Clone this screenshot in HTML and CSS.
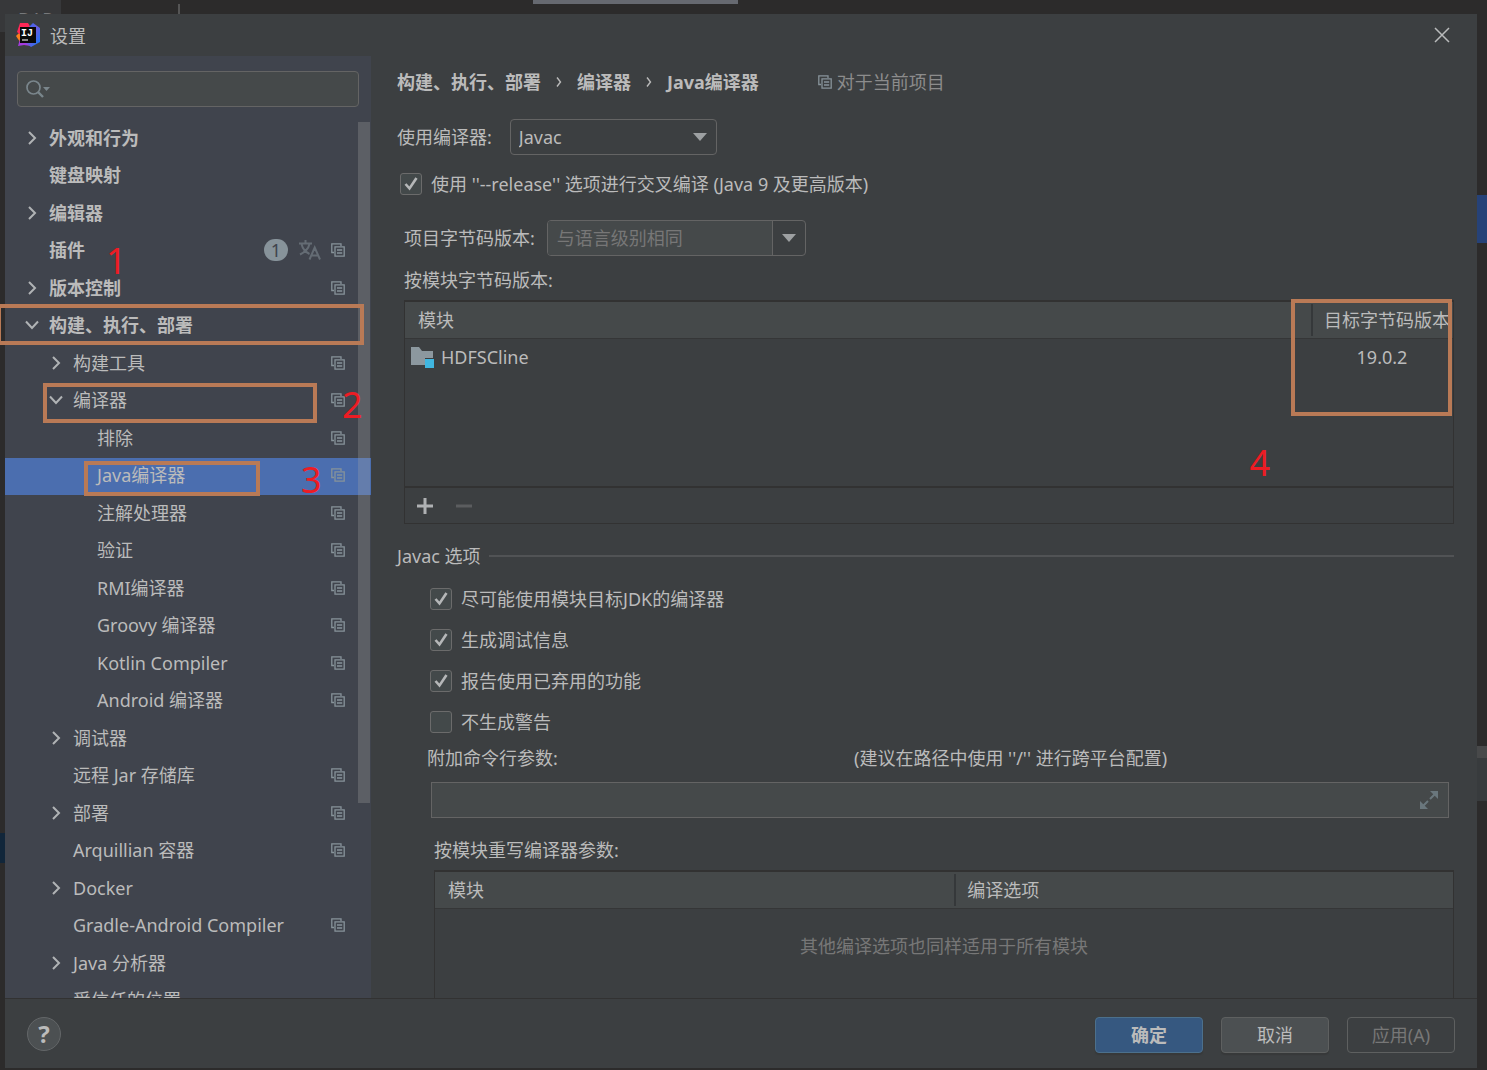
FILE: index.html
```html
<!DOCTYPE html>
<html lang="zh-CN">
<head>
<meta charset="utf-8">
<meta name="viewport" content="width=device-width, initial-scale=1">
<title>设置</title>
<link rel="stylesheet" href="styles.css">
</head>
<body>
<svg class="symbols" aria-hidden="true">
  <symbol id="right" viewBox="0 0 16 16"><path d="M5 2 11 8 5 14" fill="none" stroke="#b0b3b5" stroke-width="2"/></symbol>
  <symbol id="down" viewBox="0 0 16 16"><path d="M2 4.500 8 11 14 4.500" fill="none" stroke="#b0b3b5" stroke-width="2"/></symbol>
  <symbol id="copy" viewBox="0 0 14 14"><path d="M3 9.500H.8V.8H10V3M4 3.800h9.200v9.400H4zM6 7h5.200M6 10h5.200" fill="none" stroke="#87939a" stroke-width="1.300"/></symbol>
  <symbol id="arrow" viewBox="0 0 14 8"><path d="M0 0h14L7 8z" fill="#9da0a2"/></symbol>
  <symbol id="crumb" viewBox="0 0 6 12"><path d="M1 1.500 4.500 6 1 10.500" fill="none" stroke="#bbb" stroke-width="1.400"/></symbol>
</svg>

<div class="backdrop" aria-hidden="true">
  <span class="backdrop-tab">DAP</span><span class="backdrop-caret"></span><span class="backdrop-bar"></span>
  <span class="backdrop-blue"></span><span class="backdrop-navy"></span><span class="backdrop-scroll"></span>
</div>

<main class="dialog">
  <header class="titlebar">
    <svg class="logo" viewBox="0 0 24 24" aria-hidden="true">
      <defs><linearGradient id="blue" x1="0" y1="0" x2="1" y2="1"><stop offset="0" stop-color="#2b6cf5"/><stop offset=".5" stop-color="#6a5be0"/><stop offset="1" stop-color="#087cfa"/></linearGradient></defs>
      <path d="M0 13 4 9l4 5-4 5z" fill="#fc801d"/>
      <path d="M4 0h8l3 5-8 9-6-5z" fill="#fe2857"/>
      <path d="M4 16 2 23l6-1 7 1 5-8z" fill="#a43be0"/>
      <path d="m17 0 7 5v14l-9 5-5-4 3-16z" fill="url(#blue)"/>
      <path d="M4 4h16v16H4z" fill="#090909"/>
      <text x="5" y="13" class="logo-text">IJ</text>
      <path d="M6 17h6" stroke="#ddd" stroke-width="1.200"/>
    </svg>
    <h1>设置</h1>
    <button class="close" aria-label="关闭"><svg viewBox="0 0 16 16"><path d="m1 1 14 14M15 1 1 15" stroke="#b9bbbc" stroke-width="1.500"/></svg></button>
  </header>

  <div class="body">
    <nav class="sidebar">
      <label class="search">
        <svg viewBox="0 0 24 18" aria-hidden="true"><circle cx="7.500" cy="7.500" r="6.500" fill="none" stroke="#7a868c" stroke-width="1.700"/><path d="m12 12 5 5" stroke="#7a868c" stroke-width="2.400"/><path d="M17 7h7l-3.500 4z" fill="#7a868c"/></svg>
        <input type="search" aria-label="搜索设置">
      </label>
      <div class="tree-pane">
        <ul class="tree">
          <li class="row top"><svg class="twist"><use href="#right"/></svg><span>外观和行为</span></li>
          <li class="row top"><i class="twist"></i><span>键盘映射</span></li>
          <li class="row top"><svg class="twist"><use href="#right"/></svg><span>编辑器</span></li>
          <li class="row top"><i class="twist"></i><span>插件</span><b class="badge">1</b>
            <svg class="translate" viewBox="0 0 22 20" aria-hidden="true"><path d="M0 3.500h13M6.500 0v3.500M2.500 4c1 4.500 4 8 8 10M10.500 4C9.500 8.500 6 12 1 14.500M10.500 19.500 15.700 7.500 21 19.500M12.500 15.500h6.500" fill="none" stroke="#646c74" stroke-width="2"/></svg>
            <svg class="copy"><use href="#copy"/></svg></li>
          <li class="row top"><svg class="twist"><use href="#right"/></svg><span>版本控制</span><svg class="copy"><use href="#copy"/></svg></li>
          <li class="row top"><svg class="twist"><use href="#down"/></svg><span>构建、执行、部署</span></li>
          <li class="row sub"><svg class="twist"><use href="#right"/></svg><span>构建工具</span><svg class="copy"><use href="#copy"/></svg></li>
          <li class="row sub"><svg class="twist"><use href="#down"/></svg><span>编译器</span><svg class="copy"><use href="#copy"/></svg></li>
          <li class="row leaf"><i class="twist"></i><span>排除</span><svg class="copy"><use href="#copy"/></svg></li>
          <li class="row leaf selected"><i class="twist"></i><span>Java编译器</span><svg class="copy"><use href="#copy"/></svg></li>
          <li class="row leaf"><i class="twist"></i><span>注解处理器</span><svg class="copy"><use href="#copy"/></svg></li>
          <li class="row leaf"><i class="twist"></i><span>验证</span><svg class="copy"><use href="#copy"/></svg></li>
          <li class="row leaf"><i class="twist"></i><span>RMI编译器</span><svg class="copy"><use href="#copy"/></svg></li>
          <li class="row leaf"><i class="twist"></i><span>Groovy 编译器</span><svg class="copy"><use href="#copy"/></svg></li>
          <li class="row leaf"><i class="twist"></i><span>Kotlin Compiler</span><svg class="copy"><use href="#copy"/></svg></li>
          <li class="row leaf"><i class="twist"></i><span>Android 编译器</span><svg class="copy"><use href="#copy"/></svg></li>
          <li class="row sub"><svg class="twist"><use href="#right"/></svg><span>调试器</span></li>
          <li class="row sub"><i class="twist"></i><span>远程 Jar 存储库</span><svg class="copy"><use href="#copy"/></svg></li>
          <li class="row sub"><svg class="twist"><use href="#right"/></svg><span>部署</span><svg class="copy"><use href="#copy"/></svg></li>
          <li class="row sub"><i class="twist"></i><span>Arquillian 容器</span><svg class="copy"><use href="#copy"/></svg></li>
          <li class="row sub"><svg class="twist"><use href="#right"/></svg><span>Docker</span></li>
          <li class="row sub"><i class="twist"></i><span>Gradle-Android Compiler</span><svg class="copy"><use href="#copy"/></svg></li>
          <li class="row sub"><svg class="twist"><use href="#right"/></svg><span>Java 分析器</span></li>
          <li class="row sub"><i class="twist"></i><span>受信任的位置</span></li>
        </ul>
        <span class="thumb"></span>
      </div>
    </nav>

    <section class="content">
      <div class="crumbs">
        <b>构建、执行、部署</b><svg class="sep"><use href="#crumb"/></svg><b>编译器</b><svg class="sep"><use href="#crumb"/></svg><b>Java编译器</b>
        <span class="scope"><svg class="copy"><use href="#copy"/></svg>对于当前项目</span>
      </div>

      <div class="compiler">
        <label for="compiler">使用编译器:</label>
        <div class="select"><select id="compiler"><option>Javac</option></select><svg class="arrow"><use href="#arrow"/></svg></div>
      </div>

      <label class="check release"><input type="checkbox" checked><span>使用 ''--release'' 选项进行交叉编译 (Java 9 及更高版本)</span></label>

      <div class="level">
        <label for="level">项目字节码版本:</label>
        <div class="combo"><input id="level" type="text" placeholder="与语言级别相同"><button aria-label="展开"><svg class="arrow"><use href="#arrow"/></svg></button></div>
      </div>

      <div class="modules">
        <p>按模块字节码版本:</p>
        <div class="grid-box">
          <div class="grid-area">
            <table>
              <colgroup><col><col class="target"></colgroup>
              <thead><tr><th>模块</th><th>目标字节码版本</th></tr></thead>
              <tbody><tr>
                <td><span class="module"><svg viewBox="0 0 24 22" aria-hidden="true"><path d="M0 1h8l3 4h11v7h-8v7H0z" fill="#8c989f"/><path d="M14 13h9v9h-9z" fill="#40b6e0"/></svg>HDFSCline</span></td>
                <td class="version">19.0.2</td>
              </tr></tbody>
            </table>
          </div>
          <div class="toolbar">
            <button aria-label="添加"><svg viewBox="0 0 16 16"><path d="M0 8h16M8 0v16" stroke="#afb1b3" stroke-width="3"/></svg></button>
            <button aria-label="移除" disabled><svg viewBox="0 0 16 16"><path d="M0 8h16" stroke="#5b5d5f" stroke-width="3"/></svg></button>
          </div>
        </div>
      </div>

      <h2>Javac 选项</h2>
      <div class="options">
        <label class="check"><input type="checkbox" checked><span>尽可能使用模块目标JDK的编译器</span></label>
        <label class="check"><input type="checkbox" checked><span>生成调试信息</span></label>
        <label class="check"><input type="checkbox" checked><span>报告使用已弃用的功能</span></label>
        <label class="check"><input type="checkbox"><span>不生成警告</span></label>
      </div>

      <div class="params-head"><label for="params">附加命令行参数:</label><span>(建议在路径中使用 ''/'' 进行跨平台配置)</span></div>
      <div class="params"><input id="params" type="text">
        <button aria-label="展开"><svg viewBox="0 0 18 18"><path d="M10 0h8v8zM0 10v8h8z" fill="#6a777d"/><path d="m10 8 5-5M8 10l-5 5" stroke="#6a777d" stroke-width="2"/></svg></button></div>

      <div class="overrides">
        <p>按模块重写编译器参数:</p>
        <div class="grid-box">
          <table>
            <colgroup><col class="half"><col></colgroup>
            <thead><tr><th>模块</th><th>编译选项</th></tr></thead>
            <tbody><tr><td class="empty" colspan="2">其他编译选项也同样适用于所有模块</td></tr></tbody>
          </table>
        </div>
      </div>
    </section>
  </div>

  <footer class="footer">
    <button class="help" aria-label="帮助">?</button>
    <button class="btn primary">确定</button>
    <button class="btn">取消</button>
    <button class="btn" disabled>应用(A)</button>
  </footer>
</main>

<span class="mark mark-build"></span>
<span class="mark mark-compiler"></span>
<span class="mark mark-java"></span>
<span class="mark mark-target"></span>
<span class="step step-1">1</span>
<span class="step step-2">2</span>
<span class="step step-3">3</span>
<span class="step step-4">4</span>
</body>
</html>
```

FILE: styles.css
```css
* { box-sizing: border-box; }

body {
  position: relative;
  min-height: 100vh;
  margin: 0;
  padding: 14px 10px 2px 5px;
  overflow: hidden;
  background: #2c2b2b;
  color: #bbbbbb;
  font: 18px/24px "Noto Sans", "Noto Sans CJK SC", sans-serif;
}

h1, h2, p, ul { margin: 0; padding: 0; font-size: 18px; font-weight: 400; }
button, input, select { font: inherit; color: inherit; }
button { padding: 0; border: 0; background: none; }
svg { display: block; flex: none; }
.symbols { position: absolute; width: 0; height: 0; }

/* The editor window behind the dialog */
.backdrop span { position: absolute; }
.backdrop-tab { top: 0; left: 0; width: 61px; height: 32px; padding: 7px 0 0 18px; background: #37383a; color: #77797b; }
.backdrop-caret { top: 4px; left: 178px; width: 2px; height: 10px; background: #555; }
.backdrop-bar { top: 0; left: 533px; width: 205px; height: 4px; background: #666970; }
.backdrop-blue { top: 195px; right: 0; width: 10px; height: 48px; background: #264278; }
.backdrop-navy { top: 833px; left: 0; width: 5px; height: 30px; background: #11263a; }
.backdrop-scroll { top: 746px; right: 0; width: 10px; height: 55px; border-top: 12px solid #48494a; background: #383b3d; }

.dialog {
  position: relative;
  display: flex;
  flex-direction: column;
  height: calc(100vh - 16px);
  background: #3c3f41;
}

.titlebar { display: flex; align-items: center; height: 42px; padding: 0 27px 0 11px; gap: 10px; }
.titlebar h1 { padding-top: 2px; }
.logo { width: 24px; height: 24px; }
.logo-text { fill: #fff; font: bold 10px "Liberation Mono", monospace; }
.close { margin-left: auto; }
.close svg { width: 16px; height: 16px; }

.body { display: flex; flex: 1; min-height: 0; }

.sidebar { display: flex; flex-direction: column; flex: none; width: 366px; padding-top: 15px; gap: 13px; background: #40444d; }
.search { display: flex; align-items: center; flex: none; height: 36px; margin: 0 12px; padding: 0 8px; gap: 6px; border: 1px solid #646464; border-radius: 4px; background: #45494a; }
.search svg { width: 24px; height: 18px; }
.search input { flex: 1; min-width: 0; border: 0; outline: 0; background: none; }

.tree-pane { position: relative; flex: 1; min-height: 0; overflow: hidden; }
.tree { display: grid; grid-auto-rows: 38px 37px; list-style: none; }
.row { display: flex; align-items: center; padding: 0 26px 3px 19px; gap: 9px; white-space: nowrap; }
.row span { margin-right: auto; }
.row.top { font-weight: 700; }
.row.sub { padding-left: 43px; }
.row.leaf { padding-left: 67px; }
.row.selected { background: #4b6eaf; }
.twist { flex: none; width: 16px; height: 16px; }
.copy { width: 14px; height: 14px; }
.badge { width: 24px; height: 22px; margin-right: 2px; border-radius: 11px; background: #87939a; color: #40444d; font-weight: 400; line-height: 22px; text-align: center; }
.translate { width: 22px; height: 20px; margin-right: 1px; }
.thumb { position: absolute; top: 2px; right: 1px; width: 12px; height: 681px; background: rgb(166 166 166 / 28%); }

.content { flex: 1; min-width: 0; padding: 14px 23px 0 26px; overflow: hidden; }
.crumbs { display: flex; align-items: center; gap: 15px; white-space: nowrap; }
.sep { width: 6px; height: 12px; }
.scope { display: flex; align-items: center; gap: 5px; margin-left: 44px; color: #8c8c8c; }

.compiler { display: flex; align-items: center; gap: 18px; margin-top: 25px; }
.select { display: grid; align-items: center; width: 207px; height: 36px; }
.select select, .select .arrow { grid-area: 1 / 1; }
.select select { width: 100%; height: 36px; padding: 0 8px; appearance: none; border: 1px solid #646464; border-radius: 4px; background: #3c3f41; }
.arrow { width: 14px; height: 8px; }
.select .arrow { justify-self: end; margin-right: 10px; pointer-events: none; }

.check { display: flex; align-items: center; gap: 9px; }
.check input {
  flex: none;
  width: 22px;
  height: 22px;
  margin: 0;
  appearance: none;
  border: 1px solid #6b6b6b;
  border-radius: 3px;
  background: #43494a center / 16px 16px no-repeat;
}
.check input:checked { background-image: url("data:image/svg+xml,%3Csvg xmlns='http://www.w3.org/2000/svg' viewBox='0 0 16 16'%3E%3Cpath d='M2.500 8 6.500 12.500 13.500 2' fill='none' stroke='%23b5b7b8' stroke-width='2.600'/%3E%3C/svg%3E"); }
.release { margin: 17px 0 24px 3px; }

.level { display: flex; align-items: center; gap: 12px; margin-left: 7px; }
.combo { display: flex; width: 259px; height: 36px; border: 1px solid #646464; border-radius: 4px; background: #3c3f41; }
.combo input { flex: 1; min-width: 0; padding: 0 9px; border: 0; border-right: 1px solid #646464; border-radius: 3px 0 0 3px; outline: 0; background: #45494a; }
.combo input::placeholder { color: #777777; opacity: 1; }
.combo button { display: grid; place-items: center; width: 32px; }

.modules { margin: 12px 0 20px 7px; }
.grid-box { margin-top: 8px; border: 1px solid #323232; border-top-width: 2px; }
.grid-area { height: 184px; }
table { width: 100%; table-layout: fixed; border-collapse: separate; border-spacing: 0; }
.target { width: 142px; }
.half { width: 51%; }
th { position: relative; height: 37px; padding: 0 0 0 13px; overflow: hidden; border-bottom: 1px solid #353637; background: #45494a; font-weight: 400; text-align: left; white-space: nowrap; }
th + th::before { position: absolute; top: 2px; bottom: 2px; left: 0; width: 2px; background: #35383a; content: ""; }
td { height: 36px; padding: 0 6px; }
.module { display: flex; align-items: center; gap: 6px; }
.module svg { width: 24px; height: 22px; }
.version { text-align: center; }
.toolbar { display: flex; align-items: center; height: 37px; padding-left: 12px; gap: 23px; border-top: 2px solid #323232; }
.toolbar svg { width: 16px; height: 16px; }

h2 { display: flex; align-items: center; gap: 8px; }
h2::after { flex: 1; height: 2px; background: #515355; content: ""; }
.options { display: grid; gap: 17px; margin: 19px 0 12px 33px; }

.params-head { display: grid; grid-template-columns: 427px 1fr; margin-left: 30px; }
.params { display: flex; align-items: center; height: 36px; margin: 12px 5px 20px 34px; padding-right: 10px; border: 1px solid #646464; background: #45494a; }
.params input { flex: 1; min-width: 0; border: 0; outline: 0; background: none; }
.params svg { width: 18px; height: 18px; }

.overrides { margin-left: 37px; }
.empty { height: 180px; padding-bottom: 106px; color: #777777; text-align: center; }

.footer { display: flex; flex: none; height: 70px; padding: 18px 22px 0; gap: 18px; border-top: 1px solid #323232; }
.help { width: 34px; height: 34px; margin-right: auto; border: 1px solid #636668; border-radius: 50%; background: #4c5052; font-size: 24px; font-weight: 700; line-height: 30px; }
.btn { width: 108px; height: 36px; border: 1px solid #5e6060; border-radius: 4px; background: #4c5052; box-shadow: 0 2px 1px #37393a; }
.btn.primary { border-color: #4c708c; background: #365880; font-weight: 700; }
.btn:disabled { background: none; box-shadow: none; color: #777777; }

/* Hand-drawn tutorial marks over the dialog */
.mark { position: absolute; border: 4px solid #b97a56; }
.mark-build { top: 304px; left: 0; width: 364px; height: 41px; border-left-width: 1px; }
.mark-compiler { top: 383px; left: 43px; width: 274px; height: 40px; }
.mark-java { top: 461px; left: 84px; width: 176px; height: 35px; }
.mark-target { top: 299px; right: 35px; width: 161px; height: 117px; }
.step { position: absolute; color: #ed1c24; font-size: 36px; line-height: 40px; }
.step-1 { top: 241px; left: 106px; }
.step-2 { top: 385px; left: 342px; }
.step-3 { top: 460px; left: 301px; }
.step-4 { top: 443px; right: 217px; }
```
